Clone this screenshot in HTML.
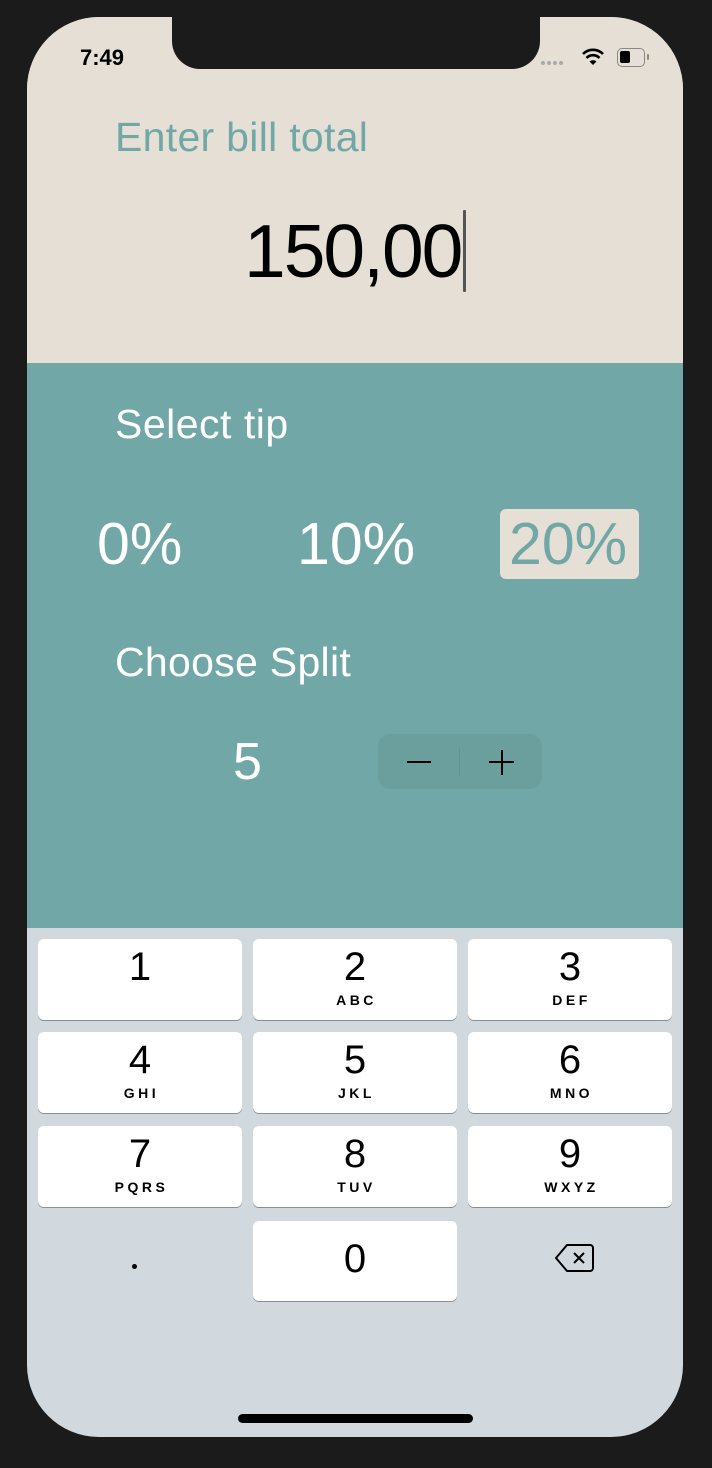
<!DOCTYPE html>
<html><head><meta charset="utf-8"><style>
*{margin:0;padding:0;box-sizing:border-box}
html,body{width:712px;height:1468px;overflow:hidden;background:#1b1b1b;font-family:"Liberation Sans",sans-serif}
.screen{position:absolute;left:27px;top:17px;width:656px;height:1420px;border-radius:72px;overflow:hidden;background:#d1d9de}
.abs{position:absolute;white-space:nowrap}
.key{position:absolute;width:204px;height:81px;background:#fff;border-radius:6px;box-shadow:0 1px 0 #8a8e92;text-align:center;color:#000}
.key .d{position:absolute;left:0;right:0;top:6px;font-size:40px;line-height:44px}
.key .l{position:absolute;left:0;right:0;top:53px;font-size:14px;font-weight:bold;letter-spacing:3.5px;line-height:16px;padding-left:3px}
</style></head><body>
<div class="screen">
  <div class="abs" style="left:0;top:0;width:656px;height:346px;background:#e6dfd5"></div>
  <div class="abs" style="left:0;top:346px;width:656px;height:565px;background:#71a8a7"></div>
  <div class="abs" style="left:145px;top:0;width:368px;height:52px;background:#1b1b1b;border-radius:0 0 28px 28px"></div>
  <div class="abs" style="left:53px;top:28px;font-size:22px;font-weight:bold;color:#000;line-height:26px">7:49</div>
  <div class="abs" style="left:514px;top:44px;width:24px;height:6px">
    <span style="position:absolute;left:0;top:0;width:4px;height:4px;border-radius:2px;background:#aaa"></span>
    <span style="position:absolute;left:6px;top:0;width:4px;height:4px;border-radius:2px;background:#aaa"></span>
    <span style="position:absolute;left:12px;top:0;width:4px;height:4px;border-radius:2px;background:#aaa"></span>
    <span style="position:absolute;left:18px;top:0;width:4px;height:4px;border-radius:2px;background:#aaa"></span>
  </div>
  <svg class="abs" style="left:554px;top:30px" width="24" height="20" viewBox="0 0 24 20"><path d="M2 7 A14 14 0 0 1 22 7" stroke="#000" stroke-width="2.6" fill="none"/><path d="M5.5 11 A9 9 0 0 1 18.5 11" stroke="#000" stroke-width="2.6" fill="none"/><path d="M12 18 L8.5 14.5 A5 5 0 0 1 15.5 14.5 Z" fill="#000"/></svg>
  <div class="abs" style="left:590px;top:31px;width:28px;height:19px;border:1.5px solid #888;border-radius:5px"><div style="position:absolute;left:2px;top:2px;width:10px;height:12px;background:#000;border-radius:2px"></div></div>
  <div class="abs" style="left:620px;top:37px;width:2px;height:6px;background:#888;border-radius:1px"></div>

  <div class="abs" style="left:88px;top:97px;font-size:41px;line-height:46px;color:#71a8a7;letter-spacing:0.3px">Enter bill total</div>
  <div class="abs" style="left:217px;top:192px;font-size:75px;line-height:84px;color:#000;letter-spacing:-2px">150,00</div>
  <div class="abs" style="left:436px;top:193px;width:3px;height:82px;background:#555;border-radius:1px"></div>

  <div class="abs" style="left:88px;top:384px;font-size:41px;line-height:46px;color:#fff;letter-spacing:0.5px">Select tip</div>
  <div class="abs" style="left:70px;top:495px;font-size:59px;line-height:64px;color:#fff">0%</div>
  <div class="abs" style="left:270px;top:495px;font-size:59px;line-height:64px;color:#fff">10%</div>
  <div class="abs" style="left:473px;top:492px;width:139px;height:70px;background:#e6dfd5;border-radius:6px"></div>
  <div class="abs" style="left:482px;top:495px;font-size:59px;line-height:64px;color:#71a8a7">20%</div>

  <div class="abs" style="left:88px;top:622px;font-size:41px;line-height:46px;color:#fff;letter-spacing:0.3px">Choose Split</div>
  <div class="abs" style="left:206px;top:716px;font-size:52px;line-height:58px;color:#fff">5</div>
  <div class="abs" style="left:351px;top:717px;width:164px;height:55px;background:rgba(0,0,0,0.05);border-radius:12px"></div>
  <div class="abs" style="left:432px;top:731px;width:1px;height:28px;background:rgba(0,0,0,0.08)"></div>
  <div class="abs" style="left:380px;top:744px;width:24px;height:2px;background:#000"></div>
  <div class="abs" style="left:462px;top:744px;width:25px;height:2px;background:#000"></div>
  <div class="abs" style="left:473.5px;top:733px;width:2px;height:25px;background:#000"></div>

  <div class="key" style="left:11px;top:922px"><div class="d">1</div></div>
  <div class="key" style="left:226px;top:922px"><div class="d">2</div><div class="l">ABC</div></div>
  <div class="key" style="left:441px;top:922px"><div class="d">3</div><div class="l">DEF</div></div>
  <div class="key" style="left:11px;top:1015px"><div class="d">4</div><div class="l">GHI</div></div>
  <div class="key" style="left:226px;top:1015px"><div class="d">5</div><div class="l">JKL</div></div>
  <div class="key" style="left:441px;top:1015px"><div class="d">6</div><div class="l">MNO</div></div>
  <div class="key" style="left:11px;top:1109px"><div class="d">7</div><div class="l">PQRS</div></div>
  <div class="key" style="left:226px;top:1109px"><div class="d">8</div><div class="l">TUV</div></div>
  <div class="key" style="left:441px;top:1109px"><div class="d">9</div><div class="l">WXYZ</div></div>
  <div class="key" style="left:226px;top:1204px;height:80px"><div class="d" style="top:16px">0</div></div>
  <div class="abs" style="left:105px;top:1247px;width:5px;height:5px;border-radius:3px;background:#000"></div>
  <svg class="abs" style="left:526px;top:1226px" width="42" height="31" viewBox="0 0 42 31"><path d="M14 2 H37 A3 3 0 0 1 40 5 V25 A3 3 0 0 1 37 28 H14 L3 15 Z" fill="none" stroke="#000" stroke-width="2" stroke-linejoin="round"/><path d="M21 10 L31 20 M31 10 L21 20" stroke="#000" stroke-width="2"/></svg>

  <div class="abs" style="left:211px;top:1397px;width:235px;height:9px;border-radius:5px;background:#000"></div>
</div>
</body></html>
